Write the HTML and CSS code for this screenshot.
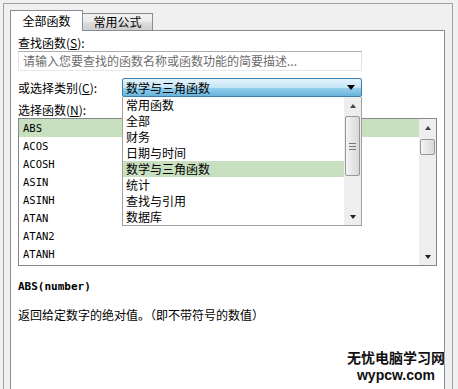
FILE: index.html
```html
<!DOCTYPE html>
<html lang="zh-CN">
<head>
  <meta charset="UTF-8">
  <title>插入函数</title>
  <link rel="stylesheet" href="styles.css">
</head>
<body>
  <div class="window">
    <!-- Tabs -->
    <div class="tabs">
      <div class="tab active">全部函数</div>
      <div class="tab">常用公式</div>
    </div>

    <div class="panel">
      <div class="label">查找函数(<u>S</u>):</div>
      <div class="search">请输入您要查找的函数名称或函数功能的简要描述...</div>

      <div class="category-row">
        <span class="label category-label">或选择类别(<u>C</u>):</span>
        <div class="select-wrap">
          <div class="select">
            <span>数学与三角函数</span>
            <span class="select-arrow"></span>
          </div>
          <!-- open dropdown -->
          <div class="dropdown">
            <div class="dropdown-items">
              <div class="item">常用函数</div>
              <div class="item">全部</div>
              <div class="item">财务</div>
              <div class="item">日期与时间</div>
              <div class="item selected">数学与三角函数</div>
              <div class="item">统计</div>
              <div class="item">查找与引用</div>
              <div class="item">数据库</div>
            </div>
            <div class="scrollbar">
              <div class="sb-btn"><span class="tri-up"></span></div>
              <div class="sb-track">
                <div class="sb-thumb tall"><span class="grip"></span></div>
              </div>
              <div class="sb-btn"><span class="tri-down"></span></div>
            </div>
          </div>
        </div>
      </div>

      <div class="label fn-label">选择函数(<u>N</u>):</div>
      <div class="list">
        <div class="list-items">
          <div class="fn selected">ABS</div>
          <div class="fn">ACOS</div>
          <div class="fn">ACOSH</div>
          <div class="fn">ASIN</div>
          <div class="fn">ASINH</div>
          <div class="fn">ATAN</div>
          <div class="fn">ATAN2</div>
          <div class="fn">ATANH</div>
        </div>
        <div class="scrollbar">
          <div class="sb-btn"><span class="tri-up"></span></div>
          <div class="sb-track">
            <div class="sb-thumb short"></div>
          </div>
          <div class="sb-btn"><span class="tri-down"></span></div>
        </div>
      </div>

      <div class="signature">ABS(number)</div>
      <div class="desc">返回给定数字的绝对值。（即不带符号的数值）</div>
    </div>
  </div>

  <div class="watermark">
    <div class="wm-cn">无忧电脑学习网</div>
    <div class="wm-en">wypcw.com</div>
  </div>
</body>
</html>
```

FILE: styles.css
```css
* {
  box-sizing: border-box;
}

body {
  margin: 0;
  height: 389px;
  overflow: hidden;
  background: #f0f0f0;
  font-family: "Noto Sans CJK SC", sans-serif;
  font-size: 12px;
  color: #000;
}

.window {
  margin: 3px 5px 0 3px;
  height: 386px;
  padding: 6px 7px 0 6px;
  border: 1px solid #a0a0a0;
  border-bottom: none;
  background: #f0f0f0;
}

/* tabs */
.tabs {
  display: flex;
  align-items: flex-end;
  height: 20px;
}

.tab {
  width: 70px;
  height: 17px;
  line-height: 16px;
  text-align: center;
  border: 1px solid #898c95;
  border-bottom: none;
  border-left: none;
  background: linear-gradient(#f2f2f2, #ebebeb 50%, #dddddd 50%, #cfcfcf);
}

.tab.active {
  position: relative;
  z-index: 1;
  width: 73px;
  height: 21px;
  margin-bottom: -1px;
  line-height: 19px;
  border-left: 1px solid #898c95;
  background: #fff;
}

.panel {
  height: 359px;
  padding: 4px 7px 0;
  border: 1px solid #898c95;
  border-bottom: none;
  background: #fff;
}

.label {
  height: 16px;
  line-height: 16px;
  white-space: nowrap;
}

.label u {
  text-underline-offset: 1px;
}

.search {
  width: 344px;
  height: 20px;
  padding-left: 4px;
  line-height: 18px;
  border: 1px solid;
  border-color: #abadb3 #dbdfe6 #e3e9ef #e2e3ea;
  color: #6d6d6d;
  white-space: nowrap;
  overflow: hidden;
}

/* category select */
.category-row {
  display: flex;
  align-items: center;
  margin-top: 7px;
}

.category-label {
  width: 104px;
}

.select-wrap {
  position: relative;
  z-index: 2;
}

.select {
  display: flex;
  align-items: center;
  justify-content: space-between;
  width: 240px;
  height: 19px;
  padding: 0 6px 0 3px;
  line-height: 17px;
  border: 1px solid #3c7fb1;
  border-radius: 2px;
  background: linear-gradient(#e5f4fc, #c4e5f6 50%, #98d1ef 50%, #68b3db);
}

.select-arrow {
  width: 0;
  height: 0;
  border-left: 4px solid transparent;
  border-right: 4px solid transparent;
  border-top: 5px solid #000;
}

.dropdown {
  position: absolute;
  top: 100%;
  left: 0;
  display: flex;
  width: 240px;
  height: 129px;
  border: 1px solid #a0a0a0;
  border-top: none;
  background: #fff;
}

.dropdown-items {
  flex: 1;
}

.item {
  height: 16px;
  line-height: 16px;
  padding-left: 3px;
}

.item.selected {
  background: #c8dfc0;
}

/* scrollbars */
.scrollbar {
  display: flex;
  flex-direction: column;
  width: 17px;
  background: #eeeeee;
}

.sb-btn {
  display: flex;
  align-items: center;
  justify-content: center;
  height: 17px;
}

.sb-track {
  flex: 1;
}

.sb-thumb {
  display: flex;
  align-items: center;
  justify-content: center;
  margin: 2px 1px 0;
  border: 1px solid #979797;
  border-radius: 2px;
  background: linear-gradient(to right, #f4f4f4, #e6e6e6 50%, #d9d9d9);
}

.sb-thumb.tall {
  height: 60px;
}

.sb-thumb.short {
  margin-top: 3px;
  height: 16px;
}

.grip {
  width: 7px;
  height: 7px;
  border-top: 1px solid #777;
  border-bottom: 1px solid #777;
  background: linear-gradient(transparent 2px, #777 2px, #777 3px, transparent 3px);
}

.tri-up,
.tri-down {
  width: 0;
  height: 0;
  border-left: 3px solid transparent;
  border-right: 3px solid transparent;
}

.tri-up {
  border-bottom: 4px solid #444;
}

.tri-down {
  border-top: 4px solid #222;
}

/* function list */
.fn-label {
  margin-top: 5px;
}

.list {
  display: flex;
  height: 148px;
  border: 1px solid #828790;
}

.list-items {
  flex: 1;
}

.fn {
  height: 18px;
  line-height: 18px;
  padding-left: 4px;
  font-family: "DejaVu Sans Mono", monospace;
  font-size: 10.5px;
}

.fn.selected {
  background: #c8dfc0;
}

.signature {
  margin-top: 13px;
  height: 16px;
  line-height: 16px;
  font-family: "DejaVu Sans Mono", monospace;
  font-size: 11px;
  font-weight: bold;
}

.desc {
  margin-top: 12px;
  height: 16px;
  line-height: 16px;
}

/* site watermark laid over the corner */
.watermark {
  position: absolute;
  left: 346px;
  top: 350px;
  width: 100px;
  text-align: center;
  font-weight: bold;
  color: #111;
  text-shadow: 0 0 2px #fff, 0 0 2px #fff;
}

.wm-cn {
  height: 14px;
  font-size: 14px;
  line-height: 14px;
}

.wm-en {
  height: 14px;
  margin-top: 4px;
  font-family: "Liberation Sans", Arial, sans-serif;
  font-size: 14px;
  line-height: 14px;
}
```
